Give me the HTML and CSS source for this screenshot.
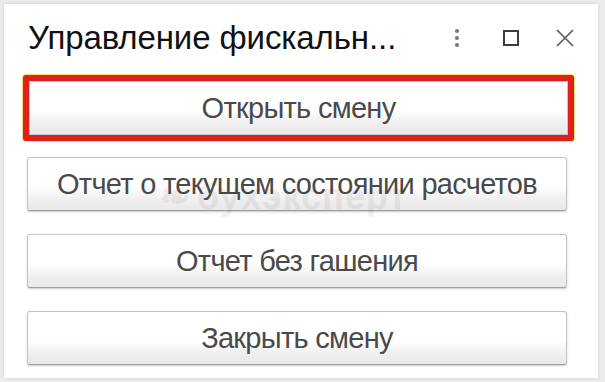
FILE: index.html
```html
<!DOCTYPE html>
<html lang="ru">
<head>
<meta charset="utf-8">
<title>Управление фискальным регистратором</title>
<link rel="stylesheet" href="styles.css">
</head>
<body>
<div class="window">
  <div class="header">
    <div class="title">Управление фискальн...</div>
    <div class="tools">
      <svg class="ico ico-more" width="8" height="20" viewBox="0 0 8 20"><circle cx="4" cy="3" r="2.1"/><circle cx="4" cy="10" r="2.1"/><circle cx="4" cy="17" r="2.1"/></svg>
      <svg class="ico ico-max" width="18" height="18" viewBox="0 0 18 18"><rect x="2" y="2" width="14" height="14"/></svg>
      <svg class="ico ico-close" width="20" height="20" viewBox="0 0 20 20"><path d="M2 2 L18 18 M18 2 L2 18"/></svg>
    </div>
  </div>
  <div class="buttons">
    <div class="focus-frame"><div class="btn">Открыть смену</div></div>
    <div class="btn btn-wide">Отчет о текущем состоянии расчетов</div>
    <div class="btn btn-wide">Отчет без гашения</div>
    <div class="btn btn-wide">Закрыть смену</div>
  </div>
  <div class="watermark"><span class="wm-logo">&#x2767;</span>бухэксперт</div>
</div>
</body>
</html>
```

FILE: styles.css
```css
html, body {
  margin: 0;
  padding: 0;
}
body {
  width: 605px;
  height: 382px;
  background: #ebebeb;
  font-family: "Liberation Sans", Arial, sans-serif;
  overflow: hidden;
}
.window {
  position: relative;
  margin: 4px 0 0 4px;
  width: 594px;
  height: 374px;
  background: #ffffff;
  box-shadow: 0 0 3px rgba(0,0,0,0.12);
}
.header {
  display: flex;
  align-items: center;
  height: 36px;
  padding: 16px 0 0 24px;
  margin-bottom: 19px;
}
.title {
  font-size: 33px;
  line-height: 36px;
  color: #111111;
  white-space: nowrap;
  flex: 1;
  letter-spacing: -0.1px;
}
.tools {
  display: flex;
  align-items: center;
  margin-right: 23px;
}
.ico-more { fill: #7a7a7a; margin-right: 41px; }
.ico-max { fill: none; stroke: #3c3c3c; stroke-width: 2; margin-right: 35px; }
.ico-close { fill: none; stroke: #5a5a5a; stroke-width: 1.7; }
.buttons {
  display: flex;
  flex-direction: column;
  align-items: flex-start;
  padding-left: 19px;
}
.focus-frame {
  width: 539px;
  border: 6px solid #e0201c;
  border-radius: 2px;
  outline: 1px solid #f3e27a;
  margin-bottom: 16px;
}
.btn {
  box-sizing: border-box;
  height: 54px;
  display: flex;
  align-items: center;
  justify-content: center;
  font-size: 29px;
  letter-spacing: -0.7px;
  color: #4a4a4a;
  background: linear-gradient(#ffffff 0%, #ffffff 55%, #f0eeee 80%, #e9e8e8 100%);
  border: 1px solid #c4c4c4;
  border-bottom-color: #9e9e9e;
  border-radius: 3px;
  white-space: nowrap;
}
.focus-frame .btn {
  border-color: #c8c8c8;
  border-radius: 0;
}
.btn-wide {
  width: 540px;
  margin-left: 4px;
  margin-bottom: 23px;
  box-shadow: 0 1px 2px rgba(0,0,0,0.22);
}
.watermark {
  position: absolute;
  left: 156px;
  top: 172px;
  font-size: 36px;
  font-weight: bold;
  color: #000;
  opacity: 0.05;
  pointer-events: none;
  white-space: nowrap;
  letter-spacing: 1px;
}
.wm-logo {
  margin-right: 6px;
}
```
